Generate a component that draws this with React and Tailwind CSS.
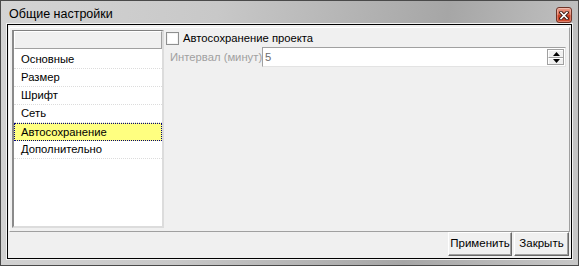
import React from 'react';

const items = ['Основные', 'Размер', 'Шрифт', 'Сеть', 'Автосохранение', 'Дополнительно'];

const CloseButton = () => (
  <div className="mt-[6px] mr-[1px] w-[16px] h-[16px] rounded-[3px] border border-[#6e3428] bg-[linear-gradient(180deg,#eba08e_0%,#dc6a4e_45%,#c63a1e_55%,#d24e30_100%)] shadow-[inset_0_0_0_1px_rgba(255,255,255,0.3)] flex items-center justify-center">
    <svg width="10" height="9" viewBox="0 0 10 9">
      <path d="M2 1.5 L8 7.5 M8 1.5 L2 7.5" stroke="#3a1a14" strokeWidth="3.4" strokeLinecap="square" />
      <path d="M2 1.5 L8 7.5 M8 1.5 L2 7.5" stroke="#ffffff" strokeWidth="1.6" strokeLinecap="square" />
    </svg>
  </div>
);

const Spinner = () => (
  <div className="ml-auto mr-[1px] w-[17px] h-[16px] flex flex-col border border-[#a0a0a0]">
    <div className="flex-1 flex items-center justify-center bg-[#f0f0f0] border-t border-l border-t-white border-l-white border-b border-b-[#a0a0a0]">
      <svg width="7" height="4" viewBox="0 0 7 4">
        <path d="M3.5 0 L7 4 L0 4 Z" fill="#000" />
      </svg>
    </div>
    <div className="flex-1 flex items-center justify-center bg-[#f0f0f0] border-t border-l border-t-white border-l-white">
      <svg width="7" height="4" viewBox="0 0 7 4">
        <path d="M0 0 L7 0 L3.5 4 Z" fill="#000" />
      </svg>
    </div>
  </div>
);

const WinButton = ({ children, width }) => (
  <button
    className={`${width} h-[24px] bg-[#f0f0f0] border border-t-white border-l-white border-b-[#696969] border-r-[#696969] shadow-[inset_-1px_-1px_0_#a0a0a0] text-[11.5px] text-black flex items-center justify-center`}
  >
    {children}
  </button>
);

export default function App() {
  return (
    <div className="w-[579px] h-[266px] font-['Liberation_Sans',Arial,sans-serif]">
      <div className="w-full h-full flex flex-col border border-[#4a4a4a] bg-[linear-gradient(100deg,#d4d4d4_0%,#c8c8c8_35%,#a6a6a6_72%,#c8c8c8_100%)] px-[5px] pb-[5px]">
        <div className="h-[22px] flex items-start justify-between">
          <span className="pl-[3px] pt-[5px] text-[12.5px] leading-[16px] text-black">Общие настройки</span>
          <CloseButton />
        </div>
        <div className="flex-1 flex border border-[#f2f2f2]">
          <div className="flex-1 flex flex-col border border-black bg-[#f0f0f0]">
            <div className="mt-[2px] mx-[1px] h-[205px] flex border border-t-white border-l-white border-b-[#a0a0a0] border-r-[#a0a0a0]">
              <div className="pl-[2px] pt-[2px]">
                <div className="w-[152px] h-[198px] flex flex-col bg-white border-t border-t-[#808080] border-l-2 border-l-[#8a8a8a] border-r-2 border-r-[#dcdcdc] border-b-2 border-b-[#dcdcdc]">
                  <div className="h-[18px] bg-[#f0f0f0] border border-t-white border-l-white border-b-[#a0a0a0] border-r-[#a0a0a0]" />
                  <div className="mt-[2px] flex flex-col">
                    {items.map((it) =>
                      it === 'Автосохранение' ? (
                        <div key={it} className="h-[18px] pl-[6px] flex items-center bg-[#ffff80] border border-dotted border-[#000080] text-[11.25px] text-black">
                          {it}
                        </div>
                      ) : (
                        <div key={it} className="h-[18px] pl-[7px] flex items-center border-b border-dotted border-[#dcdcdc] text-[11.25px] text-black">
                          {it}
                        </div>
                      )
                    )}
                  </div>
                </div>
              </div>
              <div className="flex-1 pl-[2px] pt-[4px] flex flex-col">
                <div className="flex items-center h-[13px]">
                  <div className="w-[13px] h-[13px] border border-[#8e8f8f] bg-white shadow-[inset_0_0_0_1px_#f4f4f4]" />
                  <span className="ml-[4px] text-[11.25px] text-black">Автосохранение проекта</span>
                </div>
                <div className="mt-[2px] pl-[4px] flex items-center">
                  <span className="w-[92px] text-[11.25px] text-[#a0a0a0] whitespace-nowrap">Интервал (минут)</span>
                  <div className="flex-1 mr-[3px] h-[20px] flex items-center bg-white border border-t-[#a0a0a0] border-l-[#a0a0a0] border-b-[#e3e3e3] border-r-[#e3e3e3]">
                    <span className="pl-[2px] text-[11.25px] text-[#6d6d6d]">5</span>
                    <Spinner />
                  </div>
                </div>
              </div>
            </div>
            <div className="flex-1 flex justify-end items-start pr-[2px] gap-[2px]">
              <WinButton width="w-[64px]">Применить</WinButton>
              <WinButton width="w-[55px]">Закрыть</WinButton>
            </div>
          </div>
        </div>
      </div>
    </div>
  );
}
